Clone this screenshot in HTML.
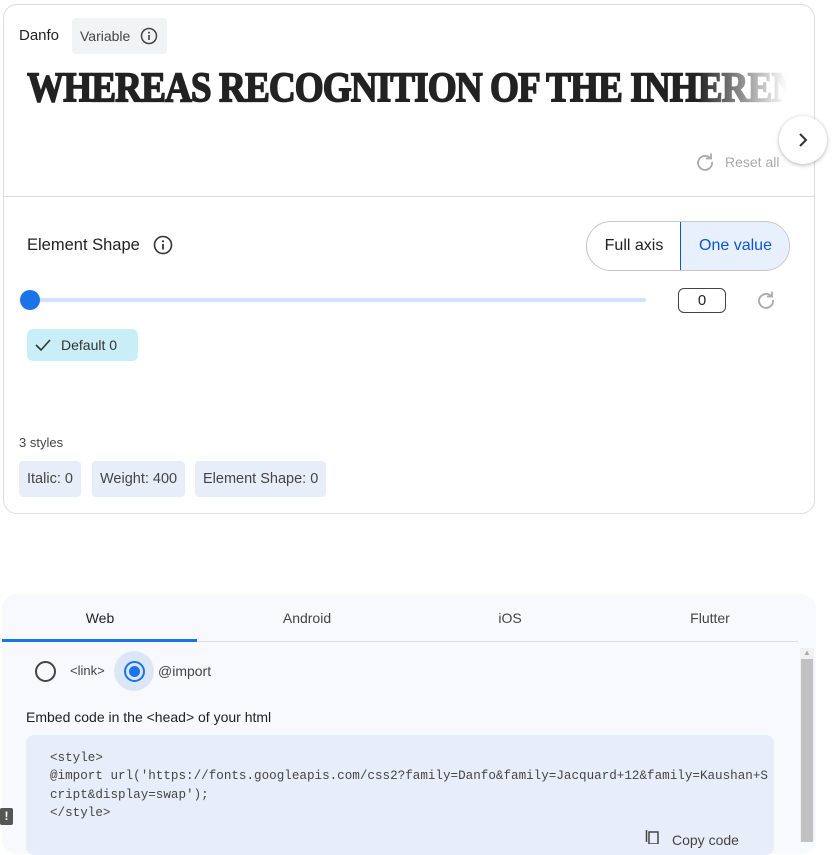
<!DOCTYPE html>
<html><head><meta charset="utf-8"><style>
*{box-sizing:border-box;margin:0;padding:0}
body{width:834px;height:842px;overflow:hidden;background:#fff;font-family:"Liberation Sans",sans-serif;color:#1f1f1f;position:relative}
.abs{position:absolute}
.card{left:3px;top:4px;width:812px;height:510px;border:1px solid #dadce0;border-radius:14px}
.chip{background:#e8eef9;border-radius:4px;font-size:14.5px;color:#444;padding:0 8px;height:36px;line-height:36px;top:461px}
.tab{top:610px;font-size:14px;color:#444;width:200px;text-align:center}
.code{font-family:"Liberation Mono",monospace;font-size:12.6px;color:#444;line-height:18.3px}
</style></head><body>
<div class="abs card"></div>
<div class="abs" style="left:19px;top:27px;font-size:15px">Danfo</div>
<div class="abs" style="left:72px;top:18px;width:95px;height:36px;background:#f1f3f4;border-radius:4px;font-size:14px;color:#444;line-height:36px;padding-left:8px">Variable
<svg style="position:absolute;left:68px;top:9px" width="18" height="18" viewBox="0 0 18 18"><circle cx="9" cy="9" r="7.5" fill="none" stroke="#444" stroke-width="1.5"/><rect x="8.2" y="8" width="1.6" height="5" fill="#444"/><circle cx="9" cy="5.6" r="1" fill="#444"/></svg></div>
<div class="abs" style="left:27px;top:66px;width:760px;height:42px;overflow:hidden">
<div style="font-family:'Liberation Serif',serif;font-weight:900;font-size:40px;line-height:42px;white-space:nowrap;color:#222;transform-origin:0 0;transform:scale(0.93,1.05);letter-spacing:-1px;-webkit-text-stroke:1.5px #222">WHEREAS RECOGNITION OF THE INHEREN</div>
<div class="abs" style="right:0;top:0;width:90px;height:42px;background:linear-gradient(to right,rgba(255,255,255,0),#fff)"></div></div>
<div class="abs" style="left:779px;top:116px;width:48px;height:48px;border-radius:50%;background:#fff;box-shadow:0 1px 4px rgba(0,0,0,.3)">
<svg style="position:absolute;left:16px;top:16px" width="16" height="16" viewBox="0 0 16 16"><path d="M5 2l6 6-6 6" fill="none" stroke="#333" stroke-width="2"/></svg></div>
<svg class="abs" style="left:695px;top:152px" width="20" height="20" viewBox="0 0 20 20"><path d="M15.5 6.5A7 7 0 1 0 17 10" fill="none" stroke="#aaa" stroke-width="1.8"/><path d="M11 6.5h5v-5" fill="none" stroke="#aaa" stroke-width="1.8"/></svg>
<div class="abs" style="left:725px;top:154px;font-size:14px;color:#aaa">Reset all</div>
<div class="abs" style="left:3px;top:196px;width:812px;height:1px;background:#dadce0"></div>
<div class="abs" style="left:27px;top:236px;font-size:16.5px">Element Shape</div>
<svg class="abs" style="left:153px;top:235px" width="20" height="20" viewBox="0 0 20 20"><circle cx="10" cy="10" r="8.5" fill="none" stroke="#333" stroke-width="1.6"/><rect x="9.1" y="9" width="1.8" height="5.5" fill="#333"/><circle cx="10" cy="6.3" r="1.1" fill="#333"/></svg>
<div class="abs" style="left:586px;top:221px;width:204px;height:50px;border:1px solid #c4c7c5;border-radius:25px;overflow:hidden">
<div class="abs" style="left:0;top:0;width:94px;height:48px;line-height:48px;text-align:center;font-size:16px">Full axis</div>
<div class="abs" style="left:93px;top:-1px;width:111px;height:50px;line-height:48px;text-align:center;font-size:16px;color:#0b57d0;background:#e8f0fe;border:1px solid #0b57d0;border-radius:0 25px 25px 0">One value</div></div>
<div class="abs" style="left:30px;top:298px;width:616px;height:4px;background:#d3e3fd;border-radius:2px"></div>
<div class="abs" style="left:20px;top:290px;width:20px;height:20px;border-radius:50%;background:#1a73e8"></div>
<div class="abs" style="left:678px;top:288px;width:48px;height:25px;border:1px solid #444;border-radius:6px;text-align:center;line-height:23px;font-size:15px">0</div>
<svg class="abs" style="left:756px;top:290px" width="20" height="20" viewBox="0 0 20 20"><path d="M15.5 6.5A7 7 0 1 0 17 10" fill="none" stroke="#aaa" stroke-width="1.8"/><path d="M11 6.5h5v-5" fill="none" stroke="#aaa" stroke-width="1.8"/></svg>
<div class="abs" style="left:27px;top:329px;width:111px;height:32px;background:#c9eef7;border-radius:6px;font-size:14px;color:#333;line-height:32px;padding-left:34px">Default 0
<svg style="position:absolute;left:8px;top:9px" width="16" height="14" viewBox="0 0 16 14"><path d="M1 7l5 5L15 2" fill="none" stroke="#333" stroke-width="1.6"/></svg></div>
<div class="abs" style="left:19px;top:435px;font-size:13px;color:#444">3 styles</div>
<div class="abs chip" style="left:19px">Italic: 0</div>
<div class="abs chip" style="left:92px">Weight: 400</div>
<div class="abs chip" style="left:195px">Element Shape: 0</div>
<div class="abs" style="left:2px;top:594px;width:814px;height:260px;background:#f8f9fd;border-radius:14px"></div>
<div class="tab abs" style="left:0;color:#1f1f1f">Web</div>
<div class="tab abs" style="left:207px">Android</div>
<div class="tab abs" style="left:410px">iOS</div>
<div class="tab abs" style="left:610px">Flutter</div>
<div class="abs" style="left:2px;top:641px;width:796px;height:1px;background:#dadce0"></div>
<div class="abs" style="left:2px;top:639px;width:195px;height:3px;background:#1a73e8"></div>
<div class="abs" style="left:800px;top:648px;width:14px;height:194px;background:#f1f1f1"></div>
<div class="abs" style="left:801px;top:659px;width:12px;height:183px;background:#c1c1c1"></div>
<div class="abs" style="left:803px;top:648px;font-size:8px;color:#aaa">▲</div>
<div class="abs" style="left:35px;top:661px;width:21px;height:21px;border:2px solid #444;border-radius:50%"></div>
<div class="abs" style="left:70px;top:663px;font-size:13px;color:#444">&lt;link&gt;</div>
<div class="abs" style="left:114px;top:651px;width:40px;height:40px;border-radius:50%;background:#dbe7f9"></div>
<div class="abs" style="left:124px;top:661px;width:21px;height:21px;border:2px solid #1a73e8;border-radius:50%"><div style="margin:3px;width:11px;height:11px;border-radius:50%;background:#1a73e8"></div></div>
<div class="abs" style="left:158px;top:663px;font-size:14px;color:#444">@import</div>
<div class="abs" style="left:26px;top:709px;font-size:14px">Embed code in the &lt;head&gt; of your html</div>
<div class="abs" style="left:26px;top:735px;width:748px;height:120px;background:#e8eef9;border-radius:8px"></div>
<div class="abs code" style="left:50px;top:749px;white-space:pre">&lt;style&gt;
@import url('https://fonts.googleapis.com/css2?family=Danfo&amp;family=Jacquard+12&amp;family=Kaushan+S
cript&amp;display=swap');
&lt;/style&gt;</div>
<div class="abs" style="left:672px;top:832px;font-size:14px;color:#444">Copy code</div>
<svg class="abs" style="left:645px;top:830px" width="16" height="14" viewBox="0 0 16 14"><rect x="4" y="2" width="9" height="12" fill="none" stroke="#444" stroke-width="1.5"/><path d="M1.5 0v12" stroke="#444" stroke-width="1.5"/></svg>
<div class="abs" style="left:0;top:808px;width:13px;height:17px;background:#555;border-radius:2px;color:#fff;font-size:12px;font-weight:bold;text-align:center;line-height:17px">!</div>
</body></html>
